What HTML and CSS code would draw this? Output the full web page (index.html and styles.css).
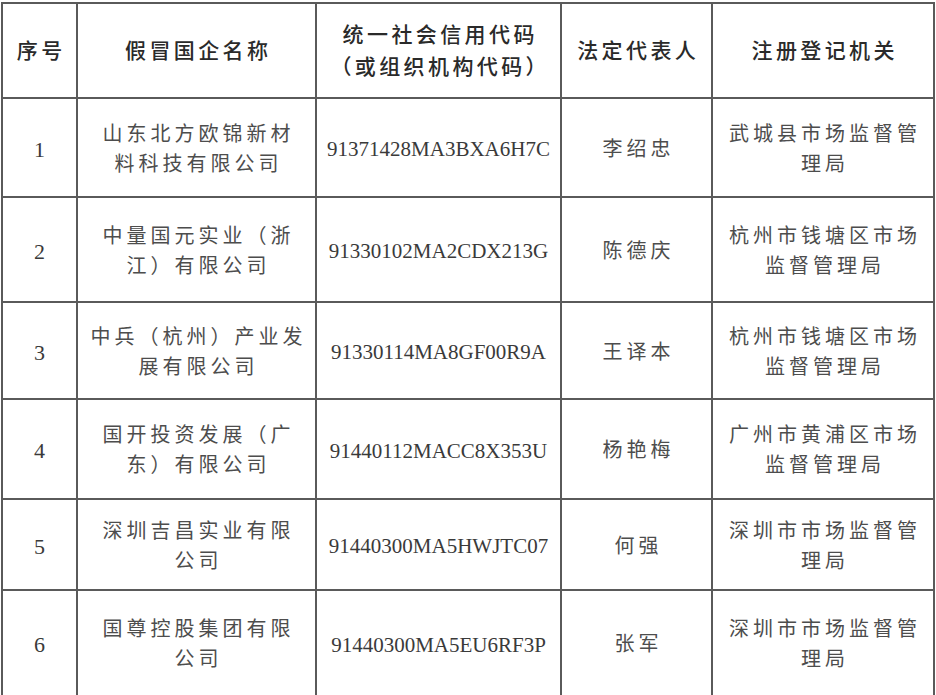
FILE: index.html
```html
<!DOCTYPE html>
<html lang="zh-CN">
<head>
<meta charset="utf-8">
<title>假冒国企名单</title>
<link rel="stylesheet" href="styles.css">
</head>
<body>
<div class="sheet">
  <div class="cell head">序号</div>
  <div class="cell head">假冒国企名称</div>
  <div class="cell head">统一社会信用代码<br>（或组织机构代码）</div>
  <div class="cell head">法定代表人</div>
  <div class="cell head">注册登记机关</div>

  <div class="cell num">1</div>
  <div class="cell zh">山东北方欧锦新材<br>料科技有限公司</div>
  <div class="cell code">91371428MA3BXA6H7C</div>
  <div class="cell zh">李绍忠</div>
  <div class="cell zh">武城县市场监督管<br>理局</div>

  <div class="cell num">2</div>
  <div class="cell zh">中量国元实业（浙<br>江）有限公司</div>
  <div class="cell code">91330102MA2CDX213G</div>
  <div class="cell zh">陈德庆</div>
  <div class="cell zh">杭州市钱塘区市场<br>监督管理局</div>

  <div class="cell num">3</div>
  <div class="cell zh">中兵（杭州）产业发<br>展有限公司</div>
  <div class="cell code">91330114MA8GF00R9A</div>
  <div class="cell zh">王译本</div>
  <div class="cell zh">杭州市钱塘区市场<br>监督管理局</div>

  <div class="cell num">4</div>
  <div class="cell zh">国开投资发展（广<br>东）有限公司</div>
  <div class="cell code">91440112MACC8X353U</div>
  <div class="cell zh">杨艳梅</div>
  <div class="cell zh">广州市黄浦区市场<br>监督管理局</div>

  <div class="cell num">5</div>
  <div class="cell zh">深圳吉昌实业有限<br>公司</div>
  <div class="cell code">91440300MA5HWJTC07</div>
  <div class="cell zh">何强</div>
  <div class="cell zh">深圳市市场监督管<br>理局</div>

  <div class="cell num">6</div>
  <div class="cell zh">国尊控股集团有限<br>公司</div>
  <div class="cell code">91440300MA5EU6RF3P</div>
  <div class="cell zh">张军</div>
  <div class="cell zh">深圳市市场监督管<br>理局</div>
</div>
</body>
</html>
```

FILE: styles.css
```css
html, body {
  margin: 0;
  padding: 0;
  background: #ffffff;
}
body {
  padding: 2px 0 0 1px;
  overflow: hidden;
}
.sheet {
  display: grid;
  grid-template-columns: 75px 239px 245px 151px 222px;
  grid-template-rows: 95px 99px 105px 97px 100px 91px 106px;
  width: max-content;
  border-top: 2px solid #5a5a5a;
  border-left: 2px solid #5a5a5a;
}
.cell {
  box-sizing: border-box;
  border-right: 2px solid #5a5a5a;
  border-bottom: 2px solid #5a5a5a;
  display: flex;
  align-items: center;
  justify-content: center;
  text-align: center;
}
.head {
  font-family: "Noto Sans CJK SC", sans-serif;
  font-size: 21px;
  font-weight: 500;
  letter-spacing: 3.4px;
  padding-left: 3.4px;
  padding-bottom: 3px;
  line-height: 32px;
  color: #2a2a2a;
}
.zh {
  font-family: "Noto Sans CJK SC", sans-serif;
  font-size: 20px;
  font-weight: 400;
  letter-spacing: 4px;
  padding-left: 4px;
  line-height: 30px;
  color: #4d4d4d;
}
.num,
.code {
  font-family: "Liberation Serif", "Times New Roman", serif;
  font-size: 21px;
  color: #3a3a3a;
  padding-top: 4px;
}
.num {
  font-size: 22px;
}
```
